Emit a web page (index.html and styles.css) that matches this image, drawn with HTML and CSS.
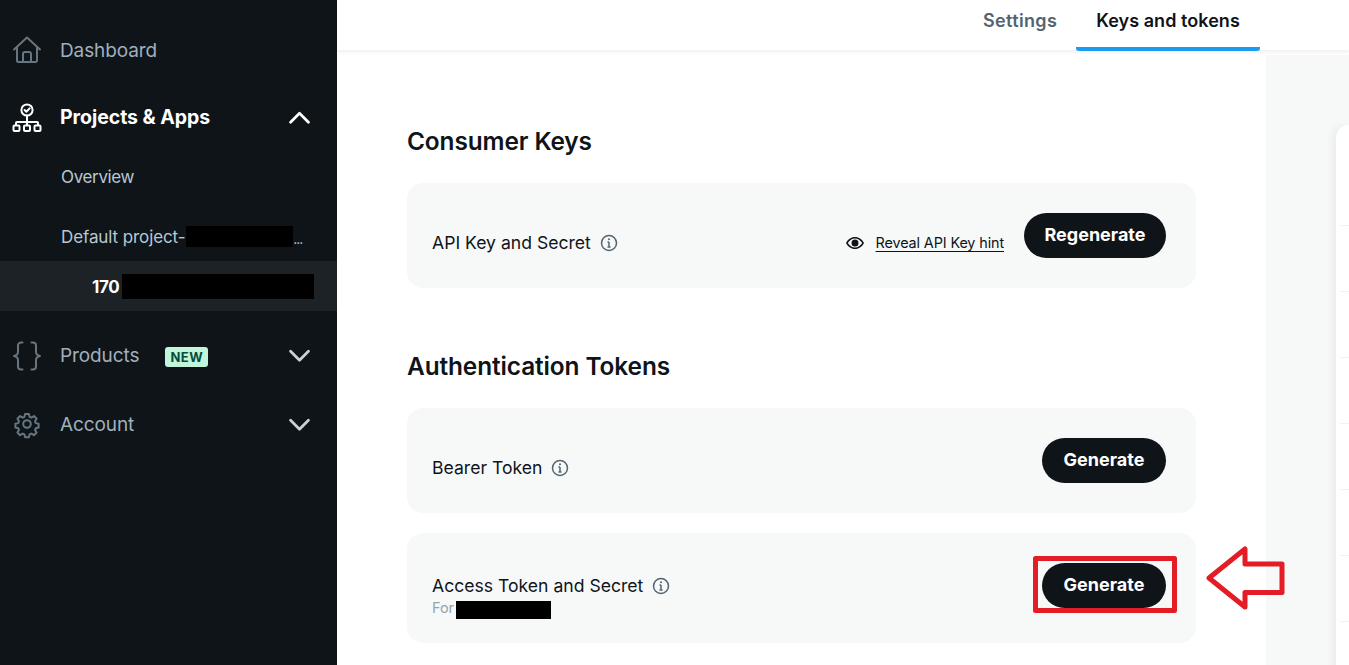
FILE: index.html
```html
<!DOCTYPE html>
<html lang="en">
<head>
<meta charset="utf-8">
<title>Keys and tokens</title>
<link rel="stylesheet" href="styles.css">
</head>
<body>
<div class="app">
  <nav class="sidebar">
    <a class="nav-row nav-dashboard">
      <svg class="nav-icon muted" viewBox="0 0 30 30"><path d="M2 14.500 15 2.500l13 12M5 12v13.500a1.500 1.500 0 0 0 1.500 1.500h17a1.500 1.500 0 0 0 1.500-1.500V12M11 27v-8a2 2 0 0 1 2-2h4a2 2 0 0 1 2 2v8"/></svg>
      <span class="nav-label">Dashboard</span>
    </a>
    <a class="nav-row nav-projects active">
      <svg class="nav-icon" viewBox="0 0 30 30"><circle cx="15" cy="7" r="5.600"/><path d="m12.600 7 1.800 1.800 3.200-3.400M15 12.600V19M4 22v-2a1 1 0 0 1 1-1h20a1 1 0 0 1 1 1v2M15 19v3"/><rect x="1.500" y="22.500" width="6" height="5.500" rx="1"/><rect x="12" y="22.500" width="6" height="5.500" rx="1"/><rect x="22.500" y="22.500" width="6" height="5.500" rx="1"/></svg>
      <span class="nav-label">Projects &amp; Apps</span>
      <svg class="chevron" viewBox="0 0 20 12"><path d="m1.500 10.500 8.500-8.500 8.500 8.500"/></svg>
    </a>
    <a class="sub-row sub-overview">Overview</a>
    <a class="sub-row sub-project">Default project-1<span class="redact redact-project"></span><span class="dots">...</span></a>
    <a class="app-row">170<span class="redact redact-app"></span></a>
    <a class="nav-row nav-products">
      <svg class="nav-icon muted" viewBox="0 0 30 30"><path d="M10.500 1.500H9a3 3 0 0 0-3 3V11c0 2-1.500 3.500-4 4 2.500.5 4 2 4 4v6.500a3 3 0 0 0 3 3h1.500M19.500 1.500H21a3 3 0 0 1 3 3V11c0 2 1.500 3.500 4 4-2.500.5-4 2-4 4v6.500a3 3 0 0 1-3 3h-1.500"/></svg>
      <span class="nav-label">Products</span>
      <span class="badge">NEW</span>
      <svg class="chevron soft" viewBox="0 0 20 12"><path d="m1.500 2 8.500 8.500 8.500-8.500"/></svg>
    </a>
    <a class="nav-row nav-account">
      <svg class="nav-icon muted" viewBox="0 0 30 30"><circle cx="15" cy="15" r="3.800"/><path d="M12.600 2.500h4.800l.8 3.600 2.300 1 3.200-2 3.300 3.300-2 3.200 1 2.300 3.500.8v4.700l-3.500.8-1 2.300 2 3.200-3.300 3.300-3.200-2-2.300 1-.8 3.500h-4.800l-.8-3.500-2.300-1-3.200 2-3.300-3.300 2-3.200-1-2.300-3.500-.8v-4.700l3.500-.8 1-2.300-2-3.200 3.300-3.300 3.200 2 2.300-1z" transform="translate(3 3) scale(.8)" stroke-linejoin="round" stroke-width="2.500"/></svg>
      <span class="nav-label">Account</span>
      <svg class="chevron soft" viewBox="0 0 20 12"><path d="m1.500 2 8.500 8.500 8.500-8.500"/></svg>
    </a>
  </nav>

  <div class="main">
    <header class="topbar">
      <a class="tab">Settings</a>
      <a class="tab tab-current">Keys and tokens</a>
    </header>
    <div class="body-row">
      <section class="content">
        <h2 class="heading heading-first">Consumer Keys</h2>
        <div class="key-card">
          <div class="key-title key-title-low">
            <span>API Key and Secret</span>
            <svg class="info" viewBox="0 0 18 18"><circle cx="9" cy="9" r="7.500"/><path d="M9 8v5M7.500 8H9M7.500 13h3"/><circle class="info-dot" cx="9" cy="5.300" r="1"/></svg>
          </div>
          <a class="reveal">
            <svg class="eye" viewBox="0 0 18 12"><path class="eye-fill" fill-rule="evenodd" d="M9 0c4 0 7.200 2.500 9 6-1.800 3.500-5 6-9 6S1.800 9.500 0 6c1.800-3.500 5-6 9-6Zm0 1.500C6 1.500 3.500 3.300 1.800 6 3.500 8.700 6 10.500 9 10.500S14.500 8.700 16.200 6C14.500 3.300 12 1.500 9 1.500ZM9 2.500a3.500 3.500 0 1 1 0 7 3.500 3.500 0 0 1 0-7Z"/></svg>
            <span class="reveal-link">Reveal API Key hint</span>
          </a>
          <button class="pill pill-wide">Regenerate</button>
        </div>
        <h2 class="heading heading-second">Authentication Tokens</h2>
        <div class="key-card">
          <div class="key-title key-title-low">
            <span>Bearer Token</span>
            <svg class="info" viewBox="0 0 18 18"><circle cx="9" cy="9" r="7.500"/><path d="M9 8v5M7.500 8H9M7.500 13h3"/><circle class="info-dot" cx="9" cy="5.300" r="1"/></svg>
          </div>
          <button class="pill">Generate</button>
        </div>
        <div class="key-card key-card-tall">
          <div class="key-stack">
            <div class="key-title">
              <span>Access Token and Secret</span>
              <svg class="info" viewBox="0 0 18 18"><circle cx="9" cy="9" r="7.500"/><path d="M9 8v5M7.500 8H9M7.500 13h3"/><circle class="info-dot" cx="9" cy="5.300" r="1"/></svg>
            </div>
            <div class="key-for">For<span class="redact redact-for"></span></div>
          </div>
          <button class="pill">Generate</button>
        </div>
      </section>
      <aside class="rail">
        <div class="rail-card">
          <div class="rail-row"></div>
          <div class="rail-row"></div>
          <div class="rail-row"></div>
          <div class="rail-row"></div>
          <div class="rail-row"></div>
          <div class="rail-row"></div>
          <div class="rail-row"></div>
        </div>
      </aside>
    </div>
  </div>
</div>
<svg class="annotation" viewBox="0 0 1349 665" aria-hidden="true">
  <rect x="1035.500" y="558.500" width="139" height="52"/>
  <path d="M1209 578 1245 549V564H1282V592.500H1245V607Z"/>
</svg>
</body>
</html>
```

FILE: styles.css
```css
* { box-sizing: border-box; }
html, body { margin: 0; height: 100%; }
body {
  position: relative;
  height: 665px;
  overflow: hidden;
  background: #fff;
  font-family: Inter, "Liberation Sans", sans-serif;
  color: #0f1419;
}
.app { display: flex; height: 665px; }

.sidebar {
  width: 337px;
  flex: none;
  background: #0f1419;
  padding-top: 16px;
  color: #9fb0bc;
}
.nav-row {
  display: flex;
  align-items: center;
  height: 68px;
  padding-left: 12px;
  padding-right: 27px;
}
.nav-projects { height: 67px; }
.nav-products { height: 69px; margin-top: 10px; }
.nav-icon {
  width: 30px;
  height: 30px;
  flex: none;
  margin-right: 18px;
  fill: none;
  stroke: #fff;
  stroke-width: 2;
  stroke-linecap: round;
  stroke-linejoin: round;
}
.nav-icon.muted { stroke: #66757f; }
.nav-label { font-size: 19px; letter-spacing: -.1px; color: #9fb0bc; }
.active .nav-label { color: #fff; font-size: 19.500px; font-weight: 700; letter-spacing: -.05px; margin-top: -2px; }
.chevron {
  width: 21px;
  height: 13px;
  margin-left: auto;
  flex: none;
  fill: none;
  stroke: #fff;
  stroke-width: 2.600;
  stroke-linecap: round;
  stroke-linejoin: round;
}
.chevron.soft { stroke: #c6d3dc; }
.badge {
  margin-left: 26px;
  margin-top: 2px;
  width: 43px;
  height: 20px;
  border-radius: 3px;
  background: #c3f5dd;
  color: #064e3b;
  font-size: 13px;
  font-weight: 700;
  letter-spacing: .5px;
  line-height: 21px;
  text-align: center;
}
.sub-row {
  display: flex;
  align-items: center;
  padding-left: 61px;
  font-size: 17px;
  letter-spacing: -.1px;
  color: #b8c8d2;
  white-space: nowrap;
}
.sub-overview { height: 52px; letter-spacing: -.35px; }
.sub-project { height: 50px; margin-top: 8px; padding-top: 2px; }
.redact { display: inline-block; background: #000; flex: none; }
.redact-project { width: 107px; height: 21px; margin-left: -6px; margin-top: -2px; }
.dots { font-size: 14px; letter-spacing: -1px; margin-top: 2px; }
.app-row {
  display: flex;
  align-items: center;
  height: 50px;
  padding-left: 92px;
  padding-top: 2px;
  background: #1c2226;
  color: #fff;
  font-size: 17px;
  font-weight: 700;
  letter-spacing: -.3px;
}
.redact-app { width: 192px; height: 25px; margin-left: 2px; margin-top: -2px; }

.main { flex: 1; min-width: 0; display: flex; flex-direction: column; }
.topbar {
  height: 50px;
  flex: none;
  display: flex;
  justify-content: flex-start;
  align-items: stretch;
  padding-left: 626px;
  box-shadow: 0 2px 4px rgba(15, 20, 25, .07);
  position: relative;
  z-index: 1;
}
.tab {
  display: flex;
  align-items: center;
  padding: 0 20px 6px;
  font-size: 18px;
  font-weight: 600;
  letter-spacing: .35px;
  color: #536471;
  border-bottom: 4px solid transparent;
  height: 51px;
}
.tab-current {
  margin-left: -1px;
  letter-spacing: .05px;
  color: #0f1419;
  border-bottom-color: #1d9bf0;
  border-radius: 0 0 3px 3px;
}
.body-row { flex: 1; display: flex; min-height: 0; }
.content { width: 929px; flex: none; padding-left: 70px; padding-top: 74px; }
.heading { margin: 0; font-size: 24.400px; font-weight: 600; line-height: 34px; letter-spacing: -.1px; }
.heading-first { margin-bottom: 25px; }
.heading-second { margin-top: 61px; margin-bottom: 25px; }
.key-card {
  width: 789px;
  height: 105px;
  display: flex;
  align-items: center;
  padding: 0 30px 0 25px;
  border-radius: 16px;
  background: #f7f9f9;
  font-size: 17.600px;
}
.key-card + .key-card { margin-top: 20px; }
.key-card-tall { height: 110px; }
.key-title { display: flex; align-items: center; gap: 9px; line-height: 20px; }
.key-title-low { margin-top: 14px; }
.key-stack { display: flex; flex-direction: column; margin-top: 18px; }
.key-for {
  display: flex;
  align-items: flex-start;
  font-size: 14.400px;
  line-height: 14px;
  height: 18px;
  margin-top: 5px;
  color: #8fa3b0;
}
.redact-for { width: 95px; height: 18px; margin-left: 2px; }
.info {
  width: 18px;
  height: 18px;
  flex: none;
  fill: none;
  stroke: #536471;
  stroke-width: 1.500;
}
.info-dot { fill: #536471; stroke: none; }
.reveal {
  margin-left: auto;
  display: flex;
  align-items: center;
  font-size: 14.400px;
  letter-spacing: -.12px;
  margin-right: 20px;
  margin-top: 14px;
}
.eye { width: 18px; height: 12px; margin-right: 12px; }
.eye-fill { fill: #0f1419; }
.reveal-link { text-decoration: underline; text-underline-offset: 3px; }
.pill {
  width: 124px;
  height: 45px;
  margin-left: auto;
  flex: none;
  border: 0;
  border-radius: 23px;
  background: #0f1419;
  color: #fff;
  font-family: inherit;
  font-size: 18px;
  font-weight: 700;
  padding: 0 0 3px;
}
.reveal + .pill { margin-left: 0; }
.pill-wide { width: 142px; }
.key-card-tall .pill { margin-top: -5px; }

.rail {
  flex: 1;
  background: #f7f9f9;
  padding: 70px 0 0 70px;
  margin-top: 5px;
  overflow: hidden;
}
.rail-card {
  height: 560px;
  padding-top: 100px;
  background: #fff;
  border-radius: 16px 0 0 0;
  box-shadow: -4px 0 8px rgba(15, 20, 25, .05);
}
.rail-row { height: 66px; margin-left: 4px; border-top: 1px solid #eff3f4; }

.annotation {
  position: absolute;
  left: 0;
  top: 0;
  width: 1349px;
  height: 665px;
  pointer-events: none;
  fill: none;
  stroke: #e31c25;
  stroke-width: 5;
  stroke-linejoin: round;
}
```
